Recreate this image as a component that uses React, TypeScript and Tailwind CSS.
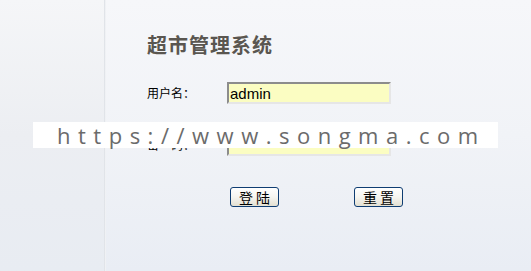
const cjk = { fontFamily: '"Noto Sans CJK SC", "Liberation Sans", sans-serif' };

function Field({ label, value, type }: { label: string; value: string; type: string }) {
  return (
    <div className="flex h-[22px] items-center">
      <span className="w-[80px] text-[12px] leading-none text-black" style={cjk}>
        {label}
      </span>
      <input
        readOnly
        type={type}
        value={value}
        className="h-[22px] w-[164px] border-t-2 border-l-2 border-r-2 border-b-2 border-t-[#8c8c8c] border-l-[#8c8c8c] border-r-[#e6e6e6] border-b-[#e6e6e6] bg-[#fbfdc2] px-[1px] text-[15px] leading-[18px] text-black outline-none"
        style={{ fontFamily: '"Liberation Sans", Arial, sans-serif' }}
      />
    </div>
  );
}

function XpButton({ children }: { children: string }) {
  return (
    <button
      className="h-[20px] w-[49px] rounded-[3px] border border-[#0f3d72] bg-gradient-to-b from-white via-[#f6f5f0] to-[#e3e0d2] pl-[3px] text-[14px] leading-[18px] tracking-[3px] text-black"
      style={cjk}
    >
      {children}
    </button>
  );
}

export default function App() {
  return (
    <div className="relative flex h-[271px] w-[531px] overflow-hidden bg-[#f1f3f7]">
      {/* left strip */}
      <div className="w-[104px] bg-gradient-to-b from-[#f5f6f8] via-[#eceef2] to-[#e8ecf2]" />
      <div className="w-[2px] bg-gradient-to-r from-[#d9dde3] to-[#f7f8fa]" />

      {/* login panel */}
      <div className="flex-1 bg-gradient-to-b from-[#f6f7fa] via-[#f1f3f7] to-[#e9edf4] pl-[41px] pt-[32px]">
        <h1
          className="h-[26px] text-[20px] font-bold leading-[26px] tracking-[1px] text-[#5a5650]"
          style={{ fontFamily: '"Noto Sans CJK SC", "DejaVu Serif", serif' }}
        >
          超市管理系统
        </h1>

        <div className="mt-[24px] flex flex-col gap-[30px]">
          <Field label="用户名：" value="admin" type="text" />
          <Field label="密　码：" value="admin" type="password" />
        </div>

        <div className="mt-[31px] flex gap-[75px] pl-[83px]">
          <XpButton>登陆</XpButton>
          <XpButton>重置</XpButton>
        </div>
      </div>

      {/* watermark band */}
      <div
        className="absolute left-[33px] top-[122px] h-[26px] w-[465px] bg-white pl-[24px] text-[22px] leading-[26px] tracking-[7.5px] whitespace-nowrap text-[#6b6b6b]"
        style={{ fontFamily: '"Open Sans", sans-serif' }}
      >
        https://www.songma.com
      </div>
    </div>
  );
}
